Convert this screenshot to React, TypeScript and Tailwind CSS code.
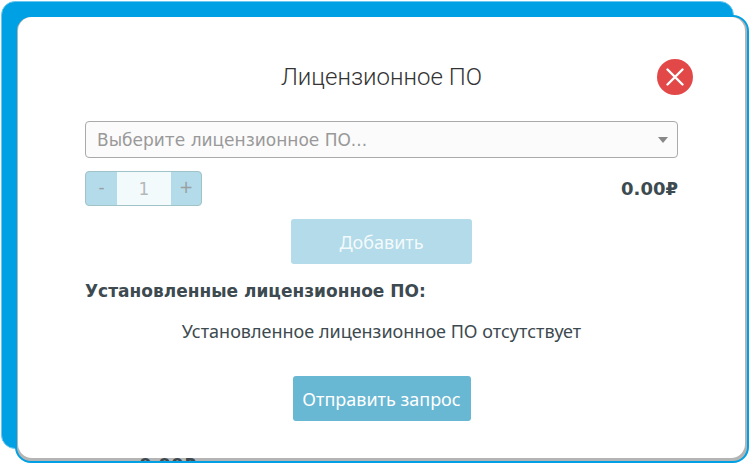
import { useState } from "react";

export default function App() {
  const [count] = useState(1);

  return (
    <div className="relative bg-white pt-[15px] pl-[15px] [font-family:'DejaVu_Sans','Noto_Sans',sans-serif] text-[17px] leading-6 text-[#3d4a50]">
      <div className="absolute top-px right-[15px] bottom-[14px] left-px rounded-[14px] border border-[#6cc7ef] bg-[#00a1e4]" />
      <div className="relative rounded-2xl border-2 border-[#00a1e4] bg-[#b4b4b4] pr-[2px] pb-[3px] pl-px">
        <div aria-hidden="true" className="absolute bottom-0 left-[122px] h-[3px] overflow-hidden text-lg leading-[14px] font-bold">
          0.00₽
        </div>
        <main
          role="dialog"
          aria-labelledby="dialog-title"
          className="relative rounded-[14px] bg-white px-[67px] pt-[42px] pb-[37px]"
        >
          <header className="grid grid-cols-[36px_1fr_36px] items-center">
            <h1
              id="dialog-title"
              className="col-start-2 text-center [font-family:Roboto,sans-serif] text-2xl font-light text-[#333333]"
            >
              Лицензионное ПО
            </h1>
            <button
              type="button"
              aria-label="Закрыть"
              className="-mr-[15px] flex size-9 items-center justify-center justify-self-end rounded-full bg-[#e34848]"
            >
              <svg viewBox="0 0 36 36" className="size-9" fill="none" stroke="white" strokeWidth="2.4" strokeLinecap="round">
                <path d="M10.5 10.5 25.5 25.5M25.5 10.5 10.5 25.5" />
              </svg>
            </button>
          </header>

          <div className="relative mt-[26px]">
            <select
              aria-label="Лицензионное ПО"
              className="block h-[37px] w-full appearance-none rounded border border-[#aaaaaa] bg-[#fbfbfb] pl-[11px] text-[#999999]"
            >
              <option>Выберите лицензионное ПО...</option>
            </select>
            <svg viewBox="0 0 10 6" className="pointer-events-none absolute top-4 right-[10px] h-[6px] w-[10px]" fill="#888888">
              <path d="M0 0h10L5 6z" />
            </svg>
          </div>

          <div className="mt-[13px] flex items-center justify-between">
            <div className="flex h-[35px] w-[117px] overflow-hidden rounded border border-[#a0c3c8] bg-[#b3dbe9] text-[#9a9fa2]">
              <button type="button" disabled aria-label="Уменьшить" className="w-[31px] pb-1">
                -
              </button>
              <input
                aria-label="Количество"
                value={count}
                readOnly
                disabled
                className="min-w-0 flex-1 bg-[#f3fafc] text-center text-[#b5b8b9]"
              />
              <button type="button" disabled aria-label="Увеличить" className="w-[30px] pb-1">
                +
              </button>
            </div>
            <output className="text-lg leading-6 font-bold">0.00₽</output>
          </div>

          <button
            type="button"
            disabled
            className="mx-auto mt-[13px] block h-[45px] w-[181px] rounded-[3px] bg-[#b3dbe9] [font-family:'Noto_Sans',sans-serif] text-lg text-[#f4fafc]"
          >
            Добавить
          </button>

          <h2 className="mt-[15px] font-bold">Установленные лицензионное ПО:</h2>
          <p className="mt-4 text-center [font-family:'Noto_Sans',sans-serif] text-lg leading-6">
            Установленное лицензионное ПО отсутствует
          </p>

          <button
            type="button"
            className="mx-auto mt-[33px] block h-[45px] w-[178px] rounded-[3px] bg-[#68b7d3] [font-family:'Noto_Sans',sans-serif] text-lg text-white"
          >
            Отправить запрос
          </button>
        </main>
      </div>
    </div>
  );
}
